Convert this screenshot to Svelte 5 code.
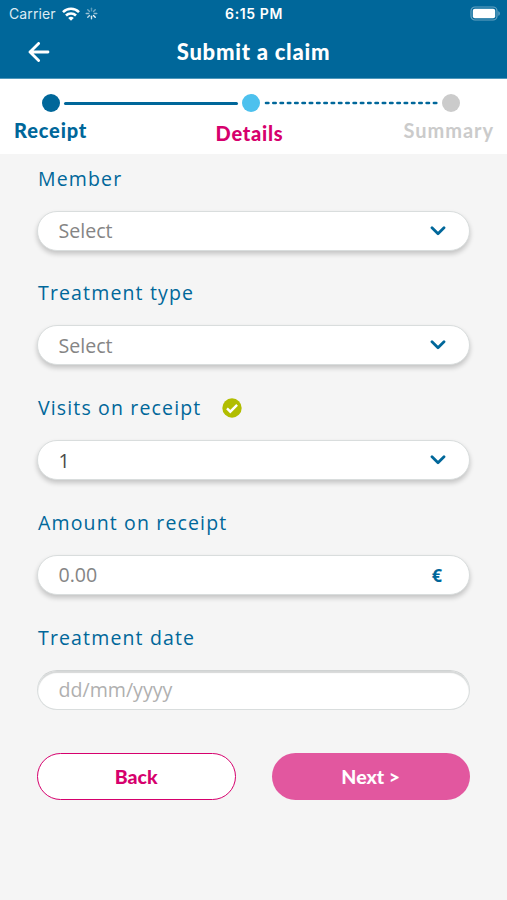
<script lang="ts">
	type Field = {
		id: string;
		label: string;
		value: string;
		kind: 'select' | 'amount' | 'date';
		filled?: boolean;
		valid?: boolean;
	};

	const fields: Field[] = [
		{ id: 'member', label: 'Member', value: 'Select', kind: 'select' },
		{ id: 'type', label: 'Treatment type', value: 'Select', kind: 'select' },
		{ id: 'visits', label: 'Visits on receipt', value: '1', kind: 'select', filled: true, valid: true },
		{ id: 'amount', label: 'Amount on receipt', value: '0.00', kind: 'amount' },
		{ id: 'date', label: 'Treatment date', value: 'dd/mm/yyyy', kind: 'date' }
	];

	// opacity of each spoke, clockwise from the top
	const spokes = [0.35, 0.45, 0.55, 0.95, 0.85, 0.75, 0.6, 0.45];
</script>

<div class="screen">
	<header class="header">
		<div class="status-bar">
			<div class="carrier">
				<span class="carrier-name">Carrier</span>
				<svg class="wifi" width="18" height="14" viewBox="0 0 18 14" fill="none" stroke="#fff" stroke-width="2.6">
					<path d="M1 5.1a11.4 11.4 0 0 1 16 0"></path>
					<path d="M4 8.5a7.1 7.1 0 0 1 10 0"></path>
					<path d="M9 13.8 6.2 11a4 4 0 0 1 5.6 0z" fill="#fff" stroke="none"></path>
				</svg>
				<svg class="spinner" width="13" height="13" viewBox="-6.5 -6.5 13 13" stroke="#fff" stroke-width="1.4" stroke-linecap="round">
					{#each spokes as opacity, i}
						<line x1="0" y1="-2.8" x2="0" y2="-5.3" {opacity} transform="rotate({i * 45})"></line>
					{/each}
				</svg>
			</div>
			<span class="time">6:15 PM</span>
			<svg class="battery" width="31" height="15" viewBox="0 0 31 15">
				<rect x="1" y="1" width="26" height="13" rx="4" fill="none" stroke="#fff" stroke-opacity="0.4" stroke-width="1.2"></rect>
				<rect x="2.8" y="2.8" width="22.4" height="9.4" rx="2" fill="#fff"></rect>
				<path d="M28.4 5.2c1.8.6 1.8 4 0 4.6z" fill="#fff" fill-opacity="0.45"></path>
			</svg>
		</div>
		<div class="title-bar">
			<button class="back-arrow" aria-label="Back">
				<svg width="22" height="20" viewBox="0 0 22 20" fill="none" stroke="#fff" stroke-width="2.8" stroke-linecap="round" stroke-linejoin="round">
					<path d="M20 10H2M10.6 1.4 2 10l8.6 8.6"></path>
				</svg>
			</button>
			<h1>Submit a claim</h1>
		</div>
	</header>

	<nav class="stepper">
		<div class="track">
			<span class="dot done"></span>
			<span class="line solid"></span>
			<span class="dot current"></span>
			<svg class="line dotted" height="4" viewBox="0 0 173 4">
				<path d="M1.5 2H172" fill="none" stroke="#00679a" stroke-width="2.6" stroke-linecap="round" stroke-dasharray="2.4 4.9"></path>
			</svg>
			<span class="dot"></span>
		</div>
		<div class="steps">
			<span class="step done">Receipt</span>
			<span class="step current">Details</span>
			<span class="step">Summary</span>
		</div>
	</nav>

	<main class="form">
		{#each fields as field (field.id)}
			<div class="field">
				<div class="label">
					<span>{field.label}</span>
					{#if field.valid}
						<svg width="20" height="20" viewBox="0 0 20 20">
							<circle cx="10" cy="10" r="9.7" fill="#b1bd00"></circle>
							<path d="m5 10.4 3.3 3.3 6.8-6.8" fill="none" stroke="#fff" stroke-width="2.4"></path>
						</svg>
					{/if}
				</div>
				<div class="input {field.kind}" class:filled={field.filled}>
					<span>{field.value}</span>
					{#if field.kind === 'select'}
						<svg class="chevron" width="16" height="10" viewBox="0 0 16 10" fill="none" stroke="#00679a" stroke-width="2.8" stroke-linecap="round" stroke-linejoin="round">
							<path d="m2 1.8 6 6 6-6"></path>
						</svg>
					{:else if field.kind === 'amount'}
						<span class="currency">€</span>
					{/if}
				</div>
			</div>
		{/each}

		<div class="actions">
			<button class="btn outline">Back</button>
			<button class="btn primary">Next &gt;</button>
		</div>
	</main>
</div>

<style>
	:global(body) {
		background: #f5f5f5;
	}
	.screen {
		min-height: 900px;
		background: #f5f5f5;
		font-family: 'Open Sans', 'Noto Sans', sans-serif;
	}
	button {
		border: 0;
		padding: 0;
		background: none;
		font: inherit;
	}
	.header {
		height: 79px;
		box-sizing: border-box;
		background: #00679a;
		border-bottom: 1px solid #4f98bb;
		color: #fff;
	}
	.status-bar {
		display: grid;
		grid-template-columns: 1fr auto 1fr;
		align-items: center;
		height: 27px;
		padding: 0 6px 0 9px;
		font-family: Inter, sans-serif;
		font-size: 14px;
	}
	.carrier {
		display: flex;
		align-items: center;
	}
	.carrier-name {
		color: #dcebf3;
		letter-spacing: 0.1px;
	}
	.wifi {
		margin-left: 6px;
	}
	.spinner {
		margin-left: 5px;
	}
	.time {
		margin-right: 2px;
		font-weight: 600;
		font-size: 14px;
		letter-spacing: 0.6px;
	}
	.battery {
		justify-self: end;
	}
	.title-bar {
		display: grid;
		grid-template-columns: 60px 1fr 60px;
		align-items: center;
		height: 50px;
	}
	.back-arrow {
		display: flex;
		padding-left: 28px;
	}
	h1 {
		margin: 0;
		text-align: center;
		font-family: Lato, sans-serif;
		font-size: 22px;
		font-weight: 900;
		letter-spacing: 0.75px;
		line-height: 26px;
	}
	.stepper {
		height: 75px;
		box-sizing: border-box;
		padding-top: 14px;
		background: #fff;
	}
	.track {
		display: flex;
		align-items: center;
		height: 20px;
		padding: 0 47px 0 42px;
	}
	.dot {
		flex: none;
		width: 18px;
		height: 18px;
		border-radius: 50%;
		background: #cbcbcb;
	}
	.dot.done {
		background: #00679a;
	}
	.dot.current {
		background: #4dc1ee;
	}
	.line {
		flex: 1;
		min-width: 0;
		margin: 0 4px;
	}
	.line.solid {
		height: 3px;
		border-radius: 2px;
		background: #00679a;
	}
	.steps {
		display: grid;
		grid-template-columns: 1fr 1fr 1fr;
		padding: 4px 13px 0 14px;
		font-family: Lato, sans-serif;
		font-size: 20px;
		font-weight: 700;
		line-height: 26px;
	}
	.step {
		text-align: right;
		color: #cbcbcb;
		letter-spacing: 0.95px;
	}
	.step.done {
		text-align: left;
		color: #00679a;
		font-weight: 900;
		letter-spacing: 0.85px;
	}
	.step.current {
		padding: 3px 9px 0 0;
		text-align: center;
		color: #d6006d;
		font-weight: 900;
		letter-spacing: 0.75px;
	}
	.form {
		padding: 9px 37px 0;
	}
	.field {
		height: 114.8px;
	}
	.label {
		display: flex;
		align-items: center;
		gap: 21px;
		height: 30px;
		padding-left: 1px;
		color: #00679a;
		font-size: 19.5px;
		font-weight: 500;
		letter-spacing: 1.15px;
	}
	.input {
		display: flex;
		align-items: center;
		justify-content: space-between;
		height: 40px;
		box-sizing: border-box;
		margin-top: 17.5px;
		padding: 0 23px 0 20.5px;
		border: 1px solid #d9dddd;
		border-radius: 20px;
		background: #fff;
		box-shadow: 0 3px 5px rgba(0, 0, 0, 0.2);
		color: #858585;
		font-size: 19.6px;
	}
	.input.filled {
		color: #4a4a4a;
	}
	.input.date {
		border-top: 1px solid #d0d3d3;
		box-shadow: inset 0 2px 1px #d6d8d8;
		color: #b0b0b0;
	}
	.currency {
		padding-right: 4px;
		color: #00679a;
		font-size: 18px;
		font-weight: 700;
	}
	.actions {
		display: flex;
		justify-content: space-between;
		padding-top: 16px;
	}
	.btn {
		width: 198.5px;
		height: 47px;
		box-sizing: border-box;
		border-radius: 24px;
		font-family: Lato, sans-serif;
		font-size: 19.5px;
		font-weight: 900;
	}
	.btn.outline {
		border: 1.5px solid #d6006d;
		background: #fff;
		color: #d6006d;
	}
	.btn.primary {
		background: #e2579f;
		color: #fff;
	}
</style>
